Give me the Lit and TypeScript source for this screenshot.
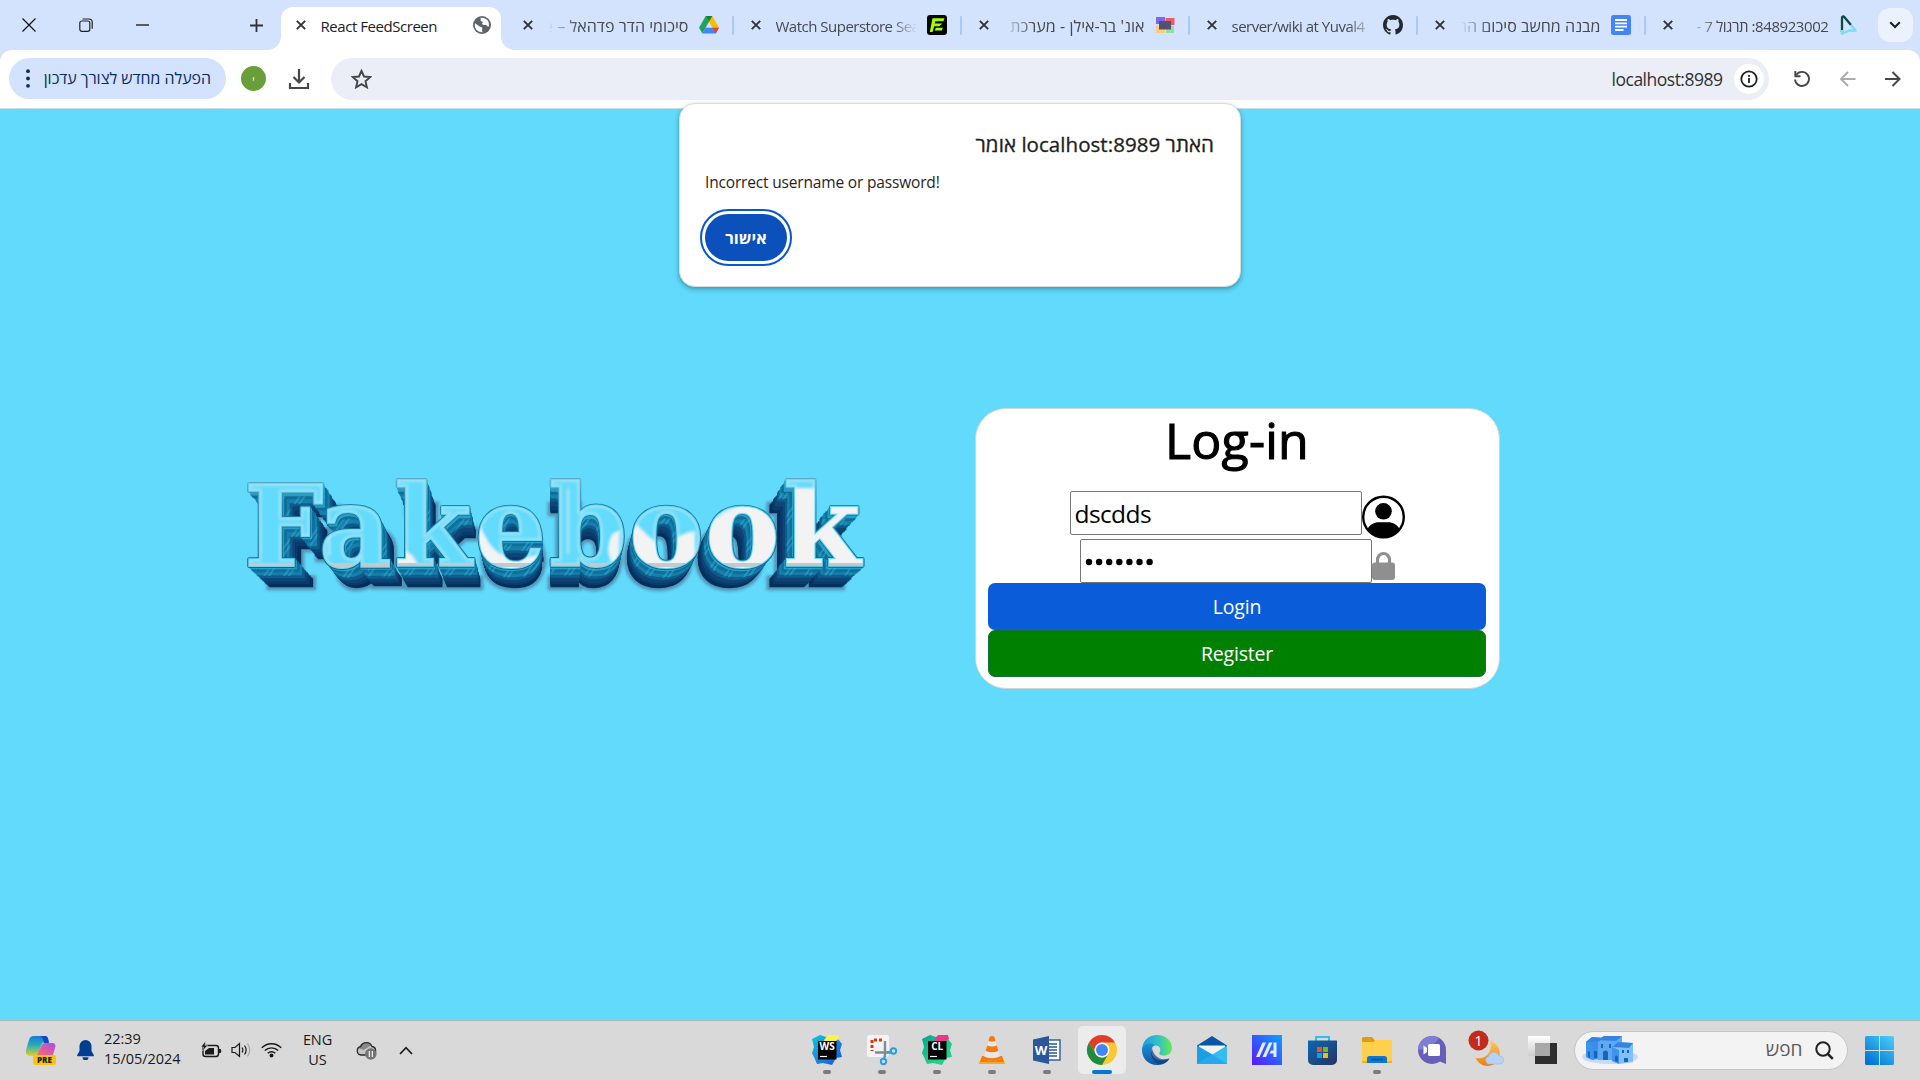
import { LitElement, html, svg, css } from "lit";
import { customElement } from "lit/decorators.js";

/* ---------- shared icons ---------- */
const closeIcon = html`<svg width="10" height="10" viewBox="0 0 10 10"><path d="M.8 .8 9.2 9.2M9.2 .8 .8 9.2" stroke="#303236" stroke-width="1.9" fill="none"/></svg>`;

const globe = html`<svg width="20" height="20" viewBox="0 0 20 20"><circle cx="10" cy="10" r="9" fill="#5f6368"/><path d="M8.5 2.8c2.5-.6 5.5.4 7 2.4 1.600 2 1.800 4.600 1 6.800-1.200-.4-1.400-1.800-2.600-2-1.300-.3-2.300.4-3.300-.4-.9-.8-.3-2.200.6-2.600-.6-.7-2-.5-2.500-1.300-.5-.9.5-1.600-.2-2.900zM3 8.300l4.700 3.300c.8.600 1.900.2 2.500 1.200.5.900-.3 1.700-.2 2.700.1.800.5 1.200.8 1.700-3.700.5-7.200-2-7.900-5.600-.2-1.100-.2-2.200.1-3.300z" fill="#fff"/></svg>`;
const drive = html`<svg width="20" height="18" viewBox="0 0 20 18"><path d="M6.700 0h6.600L20 11.700h-6.600z" fill="#fbbc04"/><path d="M6.700 0 0 11.700l3.300 5.800L10 5.800z" fill="#1ea362"/><path d="M6.700 0h6.600L10 5.800z" fill="#188038"/><path d="M6.600 11.700H20l-3.300 5.800H3.300z" fill="#4285f4"/><path d="M13.400 11.700H20l-3.300 5.800z" fill="#ea4335"/></svg>`;
const fmovies = html`<svg width="20" height="20" viewBox="0 0 20 20"><rect width="20" height="20" rx="3" fill="#050505"/><path d="M5.500 3.200h12l-1 3H8.300l-.5 2.200h7.600l-3.300 2.800H7.200L5.600 17H2.800zM9 12.800h6.800l-1 2.800H7.600z" fill="#a6ff00"/></svg>`;
const moodle = html`<svg width="20" height="18" viewBox="0 0 20 18"><rect x="1" y="1" width="9" height="7" fill="#7b68ee"/><rect x="10.500" y="2" width="9" height="7" fill="#ee5a6a"/><rect x="1" y="10" width="9" height="7" fill="#ffcb7d"/><rect x="11" y="9.500" width="8" height="7.500" fill="#8fe0a5"/><rect x="4" y="5" width="12" height="8.500" fill="#54506f"/></svg>`;
const github = html`<svg width="20" height="20" viewBox="0 0 16 16"><path fill="#24292f" d="M8 0C3.580 0 0 3.580 0 8c0 3.540 2.290 6.530 5.470 7.590.4.070.55-.17.55-.38 0-.19-.01-.82-.01-1.490-2.010.37-2.530-.49-2.690-.94-.09-.23-.48-.94-.82-1.130-.28-.15-.68-.52-.01-.53.63-.01 1.080.58 1.230.82.72 1.210 1.870.87 2.330.66.070-.52.28-.87.51-1.070-1.780-.2-3.640-.89-3.640-3.950 0-.87.31-1.590.82-2.150-.08-.2-.36-1.020.08-2.120 0 0 .67-.21 2.200.82.640-.18 1.320-.27 2-.27s1.360.09 2 .27c1.530-1.040 2.200-.82 2.200-.82.44 1.100.16 1.920.08 2.120.51.56.82 1.270.82 2.150 0 3.070-1.870 3.750-3.650 3.950.29.25.54.73.54 1.480 0 1.070-.01 1.930-.01 2.200 0 .21.15.46.55.38A8.010 8.010 0 0 0 16 8c0-4.420-3.580-8-8-8z"/></svg>`;
const docs = html`<svg width="20" height="20" viewBox="0 0 20 20"><rect width="20" height="20" rx="2.500" fill="#4285f4"/><path d="M4 5h12M4 8.300h12M4 11.700h12M4 15h8.500" stroke="#fff" stroke-width="1.800"/></svg>`;
const play = html`<svg width="20" height="20" viewBox="0 0 20 20"><path d="M3 17V3.200C3 1 4.600 1 5.500 2.300L12 10" fill="none" stroke="#0a4a48" stroke-width="2.300"/><path d="M12 10l4.500 5.500-6.300.2L3 18.600V15" fill="none" stroke="#7fdcf0" stroke-width="2.500" stroke-linejoin="round"/></svg>`;

interface Tab { title: string; kind: string; icon: unknown; active?: boolean }
const TABS: Tab[] = [
  { title: "React FeedScreen", kind: "ltr", icon: globe, active: true },
  { title: "סיכומי הדר פדהאל – e", kind: "rtl", icon: drive },
  { title: "Watch Superstore Sea", kind: "ltr", icon: fmovies },
  { title: "אונ' בר-אילן - מערכת", kind: "rtl", icon: moodle },
  { title: "server/wiki at Yuval4", kind: "ltr", icon: github },
  { title: "מבנה מחשב סיכום הר", kind: "rtl", icon: docs },
  { title: "848923002: תרגול 7 -", kind: "rtl num", icon: play },
];

const base = css`
  * { box-sizing: border-box; }
  svg { display: block; flex: none; }
`;

/* ---------- browser chrome ---------- */
@customElement("browser-bar")
export class BrowserBar extends LitElement {
  static styles = [base, css`
    :host { display: block; color: #1f1f1f; }
    .strip { display: flex; height: 50px; background: #d3e3fd; padding-top: 7px; }
    .win { display: flex; width: 228px; }
    .win > span { width: 57px; height: 36px; display: flex; align-items: center; justify-content: center; }
    .plus { width: 48.500px; height: 36px; display: flex; align-items: center; padding-left: 21.500px; }
    .tab { width: 228px; height: 43px; display: flex; align-items: flex-start; position: relative; }
    .in { display: flex; align-items: center; width: 220px; margin-left: 4px; padding-left: 15px; height: 36px; }
    .tab:not(.active) .in { position: relative; left: -1px; }
    .active .in { background: #fff; height: 43px; padding-bottom: 7px; border-radius: 12px 12px 0 0; }
    .active::before, .active::after { content: ""; position: absolute; bottom: 0; width: 13px; height: 13px; }
    .active::before { left: -9px; background: radial-gradient(circle at 0 0, transparent 12.500px, #fff 13px); }
    .active::after { right: -9px; background: radial-gradient(circle at 100% 0, transparent 12.500px, #fff 13px); }
    .sep::after { content: ""; position: absolute; right: -1px; top: 9px; width: 2px; height: 19px; background: #a8c7fa; border-radius: 1px; }
    .t { width: 141px; margin: 2px 10px 0 15px; white-space: nowrap; overflow: hidden; font-size: 15px; line-height: 22px; color: #45484d; letter-spacing: -.5px; }
    .active .t { color: #202124; }
    .ltr { mask-image: linear-gradient(90deg, #000 82%, transparent); }
    .active .ltr { mask-image: none; letter-spacing: -.45px; }
    .rtl { font-size: 16px; letter-spacing: .05px; mask-image: linear-gradient(270deg, #000 78%, transparent); }
    .num { font-size: 15px; letter-spacing: -.42px; }
    .fav { width: 20px; display: flex; justify-content: center; }
    .more { width: 35px; height: 34px; border-radius: 12px; background: #ebf1fd; margin: 1px 0 0 5px; display: flex; align-items: center; justify-content: center; }
    .corners { background: #d3e3fd; }
    .bar { height: 58px; background: #fff; border-radius: 12px 12px 0 0; display: flex; align-items: flex-start; padding: 8px 0 0 8.500px; }
    .upd { width: 217.500px; height: 41px; border-radius: 21px; background: #d3e3fd; color: #0a2a66; display: flex; align-items: center; justify-content: space-between; padding: 0 15px 0 17px; font-size: 15.900px; white-space: nowrap; }
    .upd span { padding-bottom: 1px; }
    .ava { width: 25px; height: 25px; border-radius: 50%; background: #689f38; margin: 8px 0 0 15px; color: #fff; font-size: 10px; display: flex; align-items: center; justify-content: center; }
    .dl { margin: 10px 0 0 22px; }
    .omni { width: 1437.500px; height: 42px; margin-left: 21px; border-radius: 21px; background: #ebeef7; display: flex; align-items: center; padding: 0 5px 0 20px; }
    .url { margin-left: auto; font-size: 17.500px; letter-spacing: -.500px; color: #303134; }
    .info { width: 30px; height: 30px; border-radius: 50%; background: #fff; margin-left: 11px; display: flex; align-items: center; justify-content: center; }
    .nav { display: flex; height: 42px; align-items: center; margin-left: 23px; gap: 26px; }
    .edge { height: 1px; background: #c9dde4; }
  `];

  render() {
    return html`
      <div class="strip">
        <div class="win">
          <span><svg width="14" height="14" viewBox="0 0 14 14"><path d="M.5.500l13 13M13.500.500l-13 13" stroke="#111" stroke-width="1.200"/></svg></span>
          <span><svg width="14" height="14" viewBox="0 0 14 14" fill="none" stroke="#222" stroke-width="1.200"><rect x=".8" y="3" width="10" height="10.300" rx="2"/><path d="M3.500 1h6.500a3.200 3.200 0 0 1 3.200 3.200v6.500"/></svg></span>
          <span><svg width="13" height="2"><path d="M0 1h13" stroke="#111" stroke-width="1.300"/></svg></span>
        </div>
        <div class="plus"><svg width="13" height="13" viewBox="0 0 13 13"><path d="M6.500 0v13M0 6.500h13" stroke="#303236" stroke-width="1.800"/></svg></div>
        ${TABS.map((t, i) => html`<div class="tab ${t.active ? "active" : i < TABS.length - 1 ? "sep" : ""}">
          <div class="in">${closeIcon}<div class="t ${t.kind}" dir=${t.kind === "ltr" ? "ltr" : "rtl"}>${t.title}</div><div class="fav">${t.icon}</div></div>
        </div>`)}
        <div class="more"><svg width="12" height="8" viewBox="0 0 12 8"><path d="M1.200 1.200 6 6l4.800-4.800" fill="none" stroke="#1f1f1f" stroke-width="2"/></svg></div>
      </div>
      <div class="corners"><div class="bar">
        <div class="upd">
          <svg width="4" height="19" viewBox="0 0 4 19" fill="#0a2a66"><circle cx="2" cy="2.200" r="1.900"/><circle cx="2" cy="9.500" r="1.900"/><circle cx="2" cy="16.800" r="1.900"/></svg>
          <span dir="rtl">הפעלה מחדש לצורך עדכון</span>
        </div>
        <div class="ava">י</div>
        <svg class="dl" width="22" height="22" viewBox="0 0 22 22" fill="none" stroke="#444746" stroke-width="2.200"><path d="M11 1v13M5.500 9l5.500 5.500L16.500 9M2 15v5h18v-5"/></svg>
        <div class="omni">
          <svg width="21" height="20" viewBox="0 0 21 20"><path d="M10.500 1.800l2.500 5.700 6.200.6-4.700 4.100 1.400 6.100-5.400-3.200-5.400 3.200 1.400-6.100L1.800 8.100 8 7.500z" fill="none" stroke="#444746" stroke-width="1.900"/></svg>
          <span class="url">localhost:8989</span>
          <span class="info"><svg width="18" height="18" viewBox="0 0 18 18"><circle cx="9" cy="9" r="7.700" fill="none" stroke="#1f1f1f" stroke-width="1.800"/><path d="M9 8v5M9 5v1.800" stroke="#1f1f1f" stroke-width="1.800"/></svg></span>
        </div>
        <div class="nav">
          <svg width="20" height="20" viewBox="0 0 20 20" fill="none" stroke="#444746" stroke-width="1.900"><path d="M4.300 5.800A7 7 0 1 1 3 10.500M3.300 2v5.200h5.200"/></svg>
          <svg width="20" height="20" viewBox="0 0 20 20" fill="none" stroke="#aaacb0" stroke-width="1.900"><path d="M17.500 10h-14M10 3l-7 7 7 7"/></svg>
          <svg width="20" height="20" viewBox="0 0 20 20" fill="none" stroke="#444746" stroke-width="2"><path d="M1 10h14M8.500 3l7 7-7 7"/></svg>
        </div>
      </div></div>
      <div class="edge"></div>`;
  }
}

/* ---------- extruded word mark ---------- */
@customElement("word-mark")
export class WordMark extends LitElement {
  static styles = [base, css`
    :host { display: block; }
    .word { font: bold 112px "DejaVu Serif", serif; }
  `];

  render() {
    const depth = 28;
    const shades = ["#2b9cc4", "#0f6f9c", "#1580ab", "#0c5d8c", "#0a4577", "#083a6b", "#06305f"];
    const layers = Array.from({ length: depth }, (_, i) => {
      const d = (depth - i) / depth;
      const k = 1 - 0.07 * d;
      const shade = shades[Math.min(6, Math.floor(d * 7))];
      return svg`<use href="#word" transform="translate(${(319 * (1 - k)).toFixed(2)} ${(386 * (1 - k)).toFixed(2)}) scale(${k.toFixed(4)})" fill=${shade} stroke=${shade} stroke-width="2.500"/>`;
    });
    return html`<svg width="640" height="140" viewBox="0 0 640 140">
      <defs>
        <text id="word" class="word" x="8 83 158 239 313 393 469 547" y="98">Fakebook</text>
        <clipPath id="face"><use href="#word"/></clipPath>
        <filter id="soft" x="-5%" y="-10%" width="110%" height="125%"><feGaussianBlur stdDeviation="1.800"/></filter>
        <filter id="melt"><feGaussianBlur stdDeviation="1.500"/></filter>
        <filter id="fine"><feGaussianBlur stdDeviation=".5"/></filter>
        <linearGradient id="rim" x1="0" y1="0" x2="0" y2="1"><stop offset="0" stop-color="#7cc4da"/><stop offset=".35" stop-color="#1b86ac"/><stop offset="1" stop-color="#075a80"/></linearGradient>
        <pattern id="streak" width="17" height="17" patternUnits="userSpaceOnUse" patternTransform="rotate(35)"><path d="M3 0v17M7 0v17" stroke="#39b4de" stroke-width="1.600"/></pattern>
      </defs>
      <use href="#word" transform="translate(22.300 27) scale(.93)" fill="#4f86a8" stroke="#4f86a8" stroke-width="9" filter="url(#soft)" opacity=".85"/>
      <g filter="url(#fine)">${layers}</g>
      <use href="#word" transform="translate(11 13) scale(.965)" fill="url(#streak)" opacity=".55"/>
      <use href="#word" fill="#075a80" stroke="url(#rim)" stroke-width="4" stroke-linejoin="round"/>
      <use href="#word" fill="#62dbfc" stroke="#6fd6f3" stroke-width="2"/>
      <g clip-path="url(#face)">
        <g filter="url(#melt)" fill="#f3f3f4">
          <path d="M158 82c12-2 22 4 25 20h-25zM240 56c10 4 10 30 36 33 20 1 26-2 34-4v20h-70zM393 53c12 4 14 12 28 22 12 4 20-10 38-12v40h-70zM382 100c-8-6-14-16-6-34l8-4zM466 20h174v90H466z"/>
        </g>
        <path d="M476 46c10-10 20-10 30-10-4 5-18 4-24 14z" fill="#7adcf5" filter="url(#melt)"/>
        <use href="#word" fill="none" stroke="#e6f3f7" stroke-width="4" opacity=".4" filter="url(#melt)"/>
        <path d="M0 97h640" stroke="#c3c9cd" stroke-width="4"/>
      </g>
      <path d="M20 27V92M93 66v22M167 20v66M332 20v66" stroke="#d5ebf2" stroke-width="2.500" opacity=".7" filter="url(#melt)" clip-path="url(#face)"/>
    </svg>`;
  }
}

/* ---------- login page ---------- */
@customElement("login-page")
export class LoginPage extends LitElement {
  static styles = [base, css`
    :host { display: flex; align-items: flex-start; height: 911px; background: #61dafb; padding: 299px 0 0 236px; }
    word-mark { margin-top: 60px; }
    .card { width: 525px; height: 281px; margin-left: 99px; background: #fff; border: 1px solid #cfd4d6; border-radius: 31px; padding: 2px 13px 0 12px; display: flex; flex-direction: column; align-items: center; color: #000; }
    h1 { margin: 0 0 20px; font-size: 50px; font-weight: 500; line-height: 58px; height: 60px; letter-spacing: .2px; -webkit-text-stroke: 1.100px #000; }
    .row { display: flex; }
    .field { width: 292px; height: 44px; border: 1px solid #767676; border-radius: 2px; background: #fff; display: flex; align-items: center; padding: 0 4px; font-size: 24.500px; letter-spacing: -.6px; }
    .avatar { margin-top: 4px; }
    .lock { margin-top: 12px; }
    .btn { width: 498px; height: 47px; border-radius: 7px; color: #fff; font-size: 19.500px; display: flex; align-items: center; justify-content: center; padding-bottom: 1px; letter-spacing: -.2px; }
    .login { background: #0a5cd8; }
    .reg { background: #008000; border: 1px solid #11753a; }
  `];

  render() {
    return html`
      <word-mark></word-mark>
      <div class="card">
        <h1>Log-in</h1>
        <div class="row">
          <div class="field">dscdds</div>
          <svg class="avatar" width="43" height="44" viewBox="0 0 43 44"><circle cx="21.500" cy="22" r="20.300" fill="#fff" stroke="#000" stroke-width="2.400"/><circle cx="21.500" cy="16.300" r="8.300"/><path d="M5 34.500C8 29.500 12 27.300 17 27.300h9c5 0 9 2.200 12 7.200A21 21 0 0 1 5 34.500z"/></svg>
        </div>
        <div class="row">
          <div class="field"><svg width="70" height="10" viewBox="0 0 70 10">${Array.from({ length: 7 }, (_, i) => svg`<circle cx=${4 + i * 10.1} cy="6" r="3.200"/>`)}</svg></div>
          <svg class="lock" width="23" height="29" viewBox="0 0 23 29"><path d="M5.500 13V8.500a6 6 0 0 1 12 0V13" fill="none" stroke="#8f8f8f" stroke-width="3.200"/><rect y="11.500" width="23" height="17.500" rx="3" fill="#8f8f8f"/></svg>
        </div>
        <div class="btn login">Login</div>
        <div class="btn reg">Register</div>
      </div>`;
  }
}

/* ---------- alert ---------- */
@customElement("alert-box")
export class AlertBox extends LitElement {
  static styles = [base, css`
    :host { display: flex; flex-direction: column; align-items: flex-start; width: 562px; height: 184px; background: #fff; border: 1px solid #d8dcdf; border-radius: 16px; box-shadow: 0 2px 5px rgba(0,40,60,.4); padding: 25px 26px 0 25px; color: #1f1f1f; }
    .title { align-self: flex-end; font-size: 20.500px; line-height: 30px; letter-spacing: .05px; -webkit-text-stroke: .35px #1f1f1f; white-space: nowrap; }
    .msg { font-size: 15.500px; line-height: 24px; margin-top: 11px; letter-spacing: -.17px; }
    .ok { width: 82px; height: 47px; margin-top: 20px; border-radius: 24px; background: #0b50bb; color: #fff; outline: 2px solid #0b57d0; outline-offset: 3px; display: flex; align-items: center; justify-content: center; font-size: 16.200px; font-weight: 700; }
  `];
  render() {
    return html`<div class="title" dir="rtl">האתר localhost:8989 אומר</div>
      <div class="msg">Incorrect username or password!</div>
      <div class="ok">אישור</div>`;
  }
}

/* ---------- taskbar ---------- */
const ws = (label: string, c: string[], id: string) => html`<svg width="30" height="30" viewBox="0 0 30 30"><defs><linearGradient id=${id} x1="0" y1="0" x2="1" y2="1"><stop offset="0" stop-color=${c[0]}/><stop offset=".5" stop-color=${c[1]}/><stop offset="1" stop-color=${c[2]}/></linearGradient></defs><path d="M0 4l8-4 6 2 11-2 1 4 4 5-2 6 2 7-6 1-4 7-9-2-6 1-3-7-2-4 2-6z" fill="url(#${id})"/><path d="M12 5l4-5h10l1 4-5 3h-9z" fill=${c[3]}/><rect x="6" y="6" width="18.500" height="18.500" fill="#050505"/><text x="15.200" y="15" fill="#fff" font-size="10" font-weight="700" text-anchor="middle">${label}</text><path d="M8 21.500h7" stroke="#fff" stroke-width="1.200"/></svg>`;

const APPS: { icon: unknown; open?: boolean; active?: boolean }[] = [
  { open: true, icon: ws("WS", ["#00cdd7", "#2086d7", "#075af0", "#fff045"], "wsg") },
  { open: true, icon: html`<svg width="30" height="30" viewBox="0 0 30 30"><rect width="22" height="22" rx="2.500" fill="#f2f4f7"/><path d="M15 5H5v11" fill="none" stroke="#d83b01" stroke-width="3" stroke-dasharray="3 2"/><path d="M18 6v16M8 17.500h16" stroke="#7f8c96" stroke-width="2.400"/><circle cx="26.500" cy="16" r="2.700" fill="none" stroke="#2aa0dc" stroke-width="1.900"/><circle cx="16.500" cy="26.500" r="2.700" fill="none" stroke="#2aa0dc" stroke-width="1.900"/><path d="M18 20l-1 4M20 17.500l4-1" stroke="#2aa0dc" stroke-width="2"/></svg>` },
  { open: true, icon: ws("CL", ["#00a88f", "#21c789", "#21d789", "#ed358c"], "clg") },
  { open: true, icon: html`<svg width="28" height="30" viewBox="0 0 28 30"><path d="M4 21h20l3 8H1z" fill="#f57c00"/><path d="M11.500 2Q14 0 16.500 2l6 22Q14 28 5.500 24z" fill="#e8e8e8"/><path d="M11.500 2Q14 0 16.500 2l1 4q-3.500 1.500-7 0zM9.200 10.500q4.800 2 9.600 0l1.600 5.500q-6.400 2.600-12.800 0zM6 21.500q8 3.500 16 0l.8 2.600Q14 28 5.200 24z" fill="#f37a12"/><path d="M1 27h26v2H1z" fill="#ffa726"/></svg>` },
  { open: true, icon: html`<svg width="28" height="28" viewBox="0 0 28 28"><rect x="13" y="4" width="14" height="20" fill="#fff" stroke="#2b579a" stroke-width="1.400"/><path d="M15 8h9M15 11h9M15 14h9M15 17h9M15 20h9" stroke="#2b579a" stroke-width="1.300"/><path d="M0 3.500 16 0v28L0 24.500z" fill="#2b579a"/><text x="8" y="19" fill="#fff" font-size="13" font-weight="700" text-anchor="middle">W</text></svg>` },
  { active: true, icon: html`<svg width="30" height="30" viewBox="0 0 30 30"><circle cx="15" cy="15" r="15" fill="#fcc934"/><path d="M2 7.500A15 15 0 0 1 28 7.500H15a7.500 7.500 0 0 0-6.500 11.200z" fill="#e33b2e"/><path d="M2 7.500A15 15 0 0 0 15 30l6.500-11.200a7.500 7.500 0 0 1-13 0z" fill="#1e8e3e"/><circle cx="15" cy="15" r="7.500" fill="#fff"/><circle cx="15" cy="15" r="6" fill="#4285f4"/></svg>` },
  { icon: html`<svg width="30" height="30" viewBox="0 0 30 30"><defs><linearGradient id="eg" x1="0" x2="1"><stop offset="0" stop-color="#1e9ee0"/><stop offset=".55" stop-color="#35c1c4"/><stop offset="1" stop-color="#66eb4e"/></linearGradient><linearGradient id="eb" x1="0" y1="0" x2="0" y2="1"><stop offset="0" stop-color="#1b8fd8"/><stop offset="1" stop-color="#0c59a4"/></linearGradient></defs><path d="M0 14C1 5 7 0 15 0c9 0 15 6 15 13 0 5-4 7.500-8 7.500-4 0-5.500-1.500-4.500-3 2-3 .5-7-4-7-6 0-10 1-13.500 3.500z" fill="url(#eg)"/><path d="M0 14c2-5 8-7 13-4-4 2-4 6-3 9 2 6 10 8 17.500 4.500C25 28 20 30 15 30 6 30-.5 23 0 14z" fill="url(#eb)"/><path d="M10 13c-3 7 1 15 9 16.500 4-1 7-3 8.500-6C20 26 12 23 10 13z" fill="#103f7c" opacity=".7"/></svg>` },
  { icon: html`<svg width="30" height="28" viewBox="0 0 30 28"><path d="M0 9.500 15 0l15 9.500-2 4H2z" fill="#0a57a4"/><path d="M2 9.500h26V18H2z" fill="#f3f3f3"/><path d="M0 9.500 18 20v8H0z" fill="#1a9fe3"/><path d="M30 9.500V28H0z" fill="#35bdf0"/><path d="M15 18.500 30 28H0z" fill="#28a8ea"/></svg>` },
  { icon: html`<svg width="30" height="30" viewBox="0 0 30 30"><defs><linearGradient id="mg" x1="0" y1="1" x2="1" y2="0"><stop offset="0" stop-color="#5b16ff"/><stop offset="1" stop-color="#06a3ff"/></linearGradient></defs><path d="M0 0h30v30H0z" fill="url(#mg)"/><path d="M4 22 10.500 7.500H14L7.500 22zM10.500 22 17 7.500h3.500L14 22zM21.500 7.500H24.500V22h-3v-3.500H17.500l1.500-3h2.500z" fill="#e6ecff"/></svg>` },
  { icon: html`<svg width="29" height="29" viewBox="0 0 29 29"><defs><linearGradient id="sg" x1="0" y1="0" x2="1" y2="1"><stop offset="0" stop-color="#0b68b5"/><stop offset="1" stop-color="#26345f"/></linearGradient></defs><path d="M8 7V1h13v6" fill="none" stroke="#2fbdf2" stroke-width="2"/><path d="M0 4.500h29V24a5 5 0 0 1-5 5H5a5 5 0 0 1-5-5z" fill="url(#sg)"/><path d="M9 11h5v5H9z" fill="#f25022"/><path d="M15 11h5v5h-5z" fill="#7fba00"/><path d="M9 17h5v5H9z" fill="#00a4ef"/><path d="M15 17h5v5h-5z" fill="#ffb900"/></svg>` },
  { open: true, icon: html`<svg width="30" height="28" viewBox="0 0 30 28"><path d="M0 2.500A1.500 1.500 0 0 1 1.500 1H10l3 3.500V12H0z" fill="#dd9d0c"/><path d="M0 6h11l3-2h16v23H0z" fill="#ffd04c"/><path d="M0 25h30v2H0z" fill="#f0b01f"/><path d="M5 27v-4.500A2.500 2.500 0 0 1 7.500 20h15a2.500 2.500 0 0 1 2.500 2.500V27z" fill="#0d78cf"/><path d="M9 23.500h12" stroke="#0a4f92" stroke-width="1.500"/></svg>` },
  { icon: html`<svg width="28" height="28" viewBox="0 0 28 28"><path d="M14 0a14 14 0 0 1 14 14v14l-6-2.500A14 14 0 1 1 14 0z" fill="#655fba"/><path d="M14 0A14 14 0 0 0 0 14c8-1 17-5 21-12A14 14 0 0 0 14 0z" fill="#7d7fd0"/><rect x="10" y="8" width="12" height="12" rx="1.500" fill="#fff"/><path d="M5.500 9.500 9 12v4l-3.500 2.500z" fill="#fff"/></svg>` },
  { icon: html`<svg width="36" height="36" viewBox="0 0 36 36"><defs><linearGradient id="mo" x1="0" y1="0" x2="0" y2="1"><stop offset="0" stop-color="#ffc94d"/><stop offset="1" stop-color="#ef7d1a"/></linearGradient></defs><path d="M21 9c7 2 11 8 9.500 15-1.500 6-6 10-12 10-5 0-9.500-3-12-8 9 2 18-5 14.500-17z" fill="url(#mo)"/><path d="M19 32a4 4 0 0 1 .5-7.500 5.500 5.500 0 0 1 10.500-.5 4 4 0 0 1 1 8z" fill="#b7d2f8" stroke="#8fb2e8" stroke-width=".5"/><circle cx="9.500" cy="8.500" r="10" fill="#c42b1c"/><text x="9.500" y="13.500" fill="#fff" font-size="14" text-anchor="middle">1</text></svg>` },
  { icon: html`<svg width="29" height="28" viewBox="0 0 29 28"><defs><linearGradient id="tv" x1="0" y1="0" x2="0" y2="1"><stop offset="0" stop-color="#fff"/><stop offset="1" stop-color="#cfcfcf"/></linearGradient></defs><path d="M7 7h22v21H7z" fill="#2e2e2e"/><path d="M0 0h22v20H0z" fill="url(#tv)"/><path d="M7 7h15v13H7z" fill="#a9a9a9"/></svg>` },
];

@customElement("task-bar")
export class TaskBar extends LitElement {
  static styles = [base, css`
    :host { display: flex; height: 60px; background: #d9d9d9; border-top: 1px solid #b0b5b7; color: #1a1a1a; font-size: 14.500px; }
    .tray { display: grid; width: 799.500px; grid-template-columns: 65px 24px 99px 30px 31px 29px 63px 34px 46px; padding-left: 8px; height: 58px; align-items: center; justify-items: center; }
    .clock { justify-self: start; padding-left: 7px; line-height: 20px; letter-spacing: -.05px; margin-top: -2px; }
    .lang { text-align: center; line-height: 20px; letter-spacing: -.1px; }
    .app { width: 55px; display: flex; justify-content: center; position: relative; padding-top: 5px; }
    .slot { width: 48px; height: 48px; display: flex; align-items: center; justify-content: center; border-radius: 5px; }
    .slot svg { overflow: visible; }
    .active .slot { background: #ececec; }
    .mark { position: absolute; bottom: 6px; left: 23.500px; width: 8px; height: 4px; border-radius: 2px; background: #7b7b7b; }
    .active .mark { width: 20px; left: 17.500px; background: #0078d4; }
    .search { width: 274px; height: 39px; margin: 9.500px 0 0 4px; border-radius: 20px; background: #f3f3f3; border: 1px solid #c4c4c4; display: flex; align-items: center; padding: 0 13px 0 7px; color: #5c5c5c; font-size: 19px; }
    .search span { margin: 0 12px 2px auto; }
    .start { width: 64px; height: 58px; display: flex; align-items: center; justify-content: center; }
  `];

  render() {
    return html`
      <div class="tray">
        <svg width="30" height="29" viewBox="0 0 30 29"><defs><linearGradient id="ca" x1="0" y1="0" x2="0" y2="1"><stop offset="0" stop-color="#1b78d8"/><stop offset=".45" stop-color="#22aeb8"/><stop offset="1" stop-color="#e8cf28"/></linearGradient><linearGradient id="cb" x1="1" y1="0" x2="0" y2="1"><stop offset="0" stop-color="#a84ee8"/><stop offset="1" stop-color="#ff6a6a"/></linearGradient></defs><path d="M8 0h11c3 0 3 2 4 6h-4c-2 0-3 1-4 4l-2 6c-1 3-2 4-4 4H4c-3 0-5-2-4-6L3 4c1-3 2-4 5-4z" fill="url(#ca)"/><path d="M18 0c4 0 4 3 5 7h-5c-1-5-2-6-4-7z" fill="#1248c8"/><path d="M19 7h7c3 0 4 2 3 5l-2 7H11l4-8c1-3 2-4 4-4z" fill="url(#cb)"/><rect x="7" y="19" width="23" height="10" rx="2.500" fill="#ffc30d"/><text x="18.500" y="27" font-size="8" font-weight="800" text-anchor="middle" fill="#222">PRE</text></svg>
        <svg width="17" height="20" viewBox="0 0 17 20"><path d="M8.500 0a6 6 0 0 1 6 6v5l2.300 4v1.300H.2V15l2.300-4V6a6 6 0 0 1 6-6zM5.500 17.300h6a3 3 0 0 1-6 0z" fill="#003e92"/></svg>
        <div class="clock">22:39<br>15/05/2024</div>
        <svg width="21" height="18" viewBox="0 0 21 18"><rect x="2" y="4.500" width="15.500" height="11" rx="2.500" fill="none" stroke="#1a1a1a" stroke-width="1.400"/><path d="M4 13.500V10l4-3h5v6.500z" fill="#1a1a1a"/><path d="M18 8h1a1.200 1.200 0 0 1 1.200 1.200v1.600A1.200 1.200 0 0 1 19 12h-1z" fill="#1a1a1a"/><path d="M4.500 0 0 6h2.500L1.500 10 6.500 4.500H4z" fill="#1a1a1a" stroke="#d9d9d9" stroke-width=".5"/></svg>
        <svg width="21" height="18" viewBox="0 0 21 18" fill="none" stroke="#1a1a1a" stroke-width="1.200"><path d="M1 6.500h3L8.500 2.500v13L4 11.500H1z"/><path d="M11 6.500q1.800 2.500 0 5M13.500 4.500q3.200 4.500 0 9"/><path d="M16.500 2.500q4.500 6.500 0 13" stroke="#a5a5a5"/></svg>
        <svg width="21" height="16" viewBox="0 0 21 16" fill="none" stroke="#1a1a1a" stroke-width="1.400"><path d="M.8 5.800a13.700 13.700 0 0 1 19.400 0M3.800 8.600a9.500 9.500 0 0 1 13.400 0M6.700 11.300a5.400 5.400 0 0 1 7.600 0"/><circle cx="10.500" cy="13.600" r="1.300" fill="#1a1a1a"/></svg>
        <div class="lang">ENG<br>US</div>
        <svg width="21" height="19" viewBox="0 0 21 19"><path d="M5 14a4.200 4.200 0 0 1-.3-8.300A6 6 0 0 1 16 5.500 4.300 4.300 0 0 1 16 14z" fill="#c4c4c4"/><path d="M3 7.500a6.500 6.500 0 0 1 12-3L7.500 9z" fill="#8a8a8a"/><path d="M5 14a4.200 4.200 0 0 1-.3-8.300A6 6 0 0 1 16 5.500 4.300 4.300 0 0 1 16 14z" fill="none" stroke="#2a2a2a" stroke-width="1.300"/><circle cx="14.800" cy="13" r="5.800" fill="#757575"/><path d="M13.300 10v6M16.300 10v6" stroke="#fff" stroke-width="1.100"/></svg>
        <svg width="14" height="9" viewBox="0 0 14 9"><path d="M1 8l6-6.300L13 8" fill="none" stroke="#1a1a1a" stroke-width="1.700"/></svg>
      </div>
      ${APPS.map(a => html`<div class="app ${a.active ? "active" : ""}"><div class="slot">${a.icon}</div>${a.open || a.active ? html`<div class="mark"></div>` : ""}</div>`)}
      <div class="search">
        <svg width="56" height="30" viewBox="0 0 56 30"><ellipse cx="28" cy="22" rx="28" ry="7" fill="#c5dbf7"/><path d="M4 7l6-5 12 1v20l-12 2-6-3z" fill="#3b8fe8"/><path d="M16 5l6-4h18v24H16z" fill="#5fa9f2"/><path d="M30 12l6-5 15 1v19l-14 2-7-3z" fill="#7fc0fa"/><path d="M30 12l7 3v14l-7-3zM4 7l6 3v14l-6-2z" fill="#3f93e8"/><path d="M16 5l6-4h18l-6 5zM4 7l6-5 12 1-6 4zM30 12l6-5 15 1-4 5z" fill="#3584e2"/><path d="M21 25v-7a2.500 2.500 0 0 1 5 0v7zM33 26v-4a1.500 1.500 0 0 1 3 0v5zM6 22v-6l2 1v6zM12 23v-7h3v7zM19 9h2v4h-2zM27 9h2v4h-2zM40 15h2v3h-2zM45 15h2v3h-2zM42 27v-4h4v4z" fill="#1a63bb"/></svg>
        <span dir="rtl">חפש</span>
        <svg width="19" height="19" viewBox="0 0 19 19" fill="none" stroke="#222" stroke-width="2"><circle cx="8" cy="8" r="6.700"/><path d="M12.800 12.800l5 5" stroke-width="2.600"/></svg>
      </div>
      <div class="start"><svg width="29" height="29" viewBox="0 0 29 29"><defs><linearGradient id="wg" gradientUnits="userSpaceOnUse" x1="29" y1="0" x2="5" y2="29"><stop offset="0" stop-color="#4cd0fb"/><stop offset="1" stop-color="#0072d3"/></linearGradient></defs><path d="M0 1.500A1.500 1.500 0 0 1 1.500 0H14v14H0zM15 0h12.500A1.500 1.500 0 0 1 29 1.500V14H15zM0 15h14v14H1.500A1.500 1.500 0 0 1 0 27.500zM15 15h14v12.500a1.500 1.500 0 0 1-1.500 1.500H15z" fill="url(#wg)"/></svg></div>`;
  }
}

@customElement("app-root")
export class AppRoot extends LitElement {
  static styles = css`
    :host { display: block; position: relative; width: 1920px; height: 1080px; overflow: hidden; font-family: "Open Sans", "Noto Sans", "Liberation Sans", sans-serif; font-stretch: 94%; }
    alert-box { position: absolute; left: 679px; top: 103px; box-sizing: border-box; }
    login-page { box-sizing: border-box; }
    task-bar { box-sizing: border-box; }
  `;
  render() {
    return html`<browser-bar></browser-bar><login-page></login-page><task-bar></task-bar><alert-box></alert-box>`;
  }
}
